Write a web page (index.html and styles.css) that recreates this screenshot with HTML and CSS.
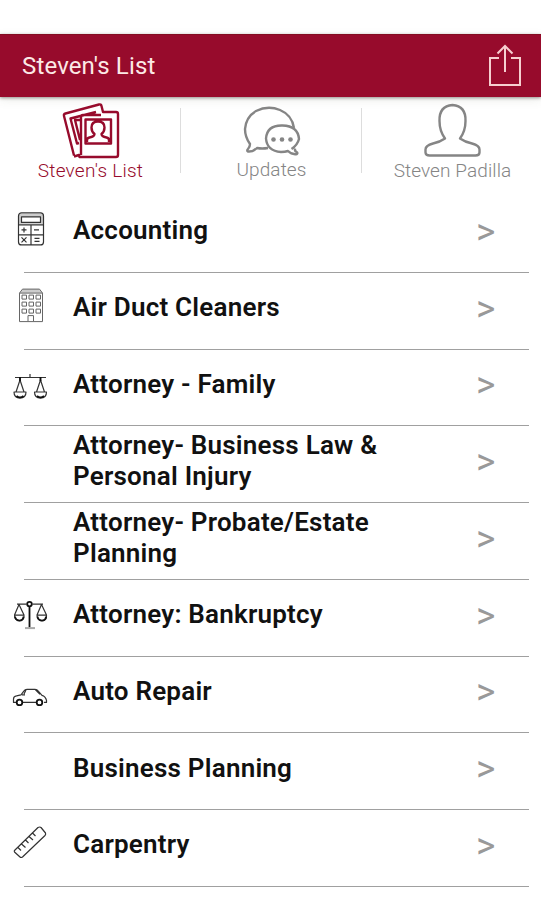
FILE: index.html
```html
<!DOCTYPE html>
<html lang="en">
<head>
    <meta charset="UTF-8">
    <meta name="viewport" content="width=device-width, initial-scale=1.0">
    <title>Steven's List</title>
    <link rel="stylesheet" href="styles.css">
</head>
<body>
    <header class="header">
        <h1>Steven's List</h1>
        <svg class="share" width="34" height="44" viewBox="0 0 34 44">
            <path d="M11 14H2v27h30V14h-9M17 28V2M9.500 9.500L17 2l7.500 7.500"/>
        </svg>
    </header>

    <nav class="tabs">
        <a class="tab active">
            <svg width="80" height="62" viewBox="1 0 80 62">
                <path d="M24 57.500L14 18q-.5-2 1.500-2.500L49 6.500q2-.5 2.500 1.500l1.500 6h13q2 0 2 2v41q0 2-2 2H29.500L29 57l-5 1.500M31 57V19q0-2 2-2h18M29 45l-2 .5-6.500-25L46 14M30 22h-5l5 20"/>
                <path d="M35.500 21.500h25.500v24H35.500zM37 44v-2q0-2 2.500-2.500 5-1 5-3.500-3-2.500-3-6.500 0-6 6.500-6t6.500 6q0 4-3 6.500 0 2.500 5 3.500 2.500.5 2.500 2.500v2"/>
            </svg>
            <span>Steven's List</span>
        </a>
        <a class="tab updates">
            <svg width="80" height="62" viewBox="2 0 80 62">
                <path d="M38 50q-6 1-11 0-4 4-9 3.500-1.500-1 0-2.500 2-2 2-5Q15 39 15 31q1-12 11-18 12-6 24-1 12 5 14 18"/>
                <path d="M61.500 51q6-4 7.500-10-1-13-16.500-13.500T36 40.500Q37 53 51 54q4 0 7-1 4 4 9 3 1-1-.5-2-2-1-1.500-3.500"/>
                <circle class="dot" cx="43.500" cy="41.500" r="2.300"/>
                <circle class="dot" cx="52" cy="41.500" r="2.300"/>
                <circle class="dot" cx="60.500" cy="41.500" r="2.300"/>
            </svg>
            <span>Updates</span>
        </a>
        <a class="tab">
            <svg width="80" height="62" viewBox="-3 0 80 62">
                <path d="M37.500 7Q51 8 50.500 23q0 10-5.500 17.500 5 3.500 12 5 7.500 2 7.500 6v3q0 3-4 3h-46q-4 0-4-3v-3q0-4 7.500-6 7-1.500 12-5Q24.500 33 24.500 23 24 8 37.500 7z"/>
            </svg>
            <span>Steven Padilla</span>
        </a>
    </nav>

    <ul class="list">
        <li>
            <svg class="icon" viewBox="0 2.100 60 50">
                <rect class="shade" x="15" y="8" width="24" height="10"/>
                <rect x="14.500" y="7" width="25" height="32" rx="3"/>
                <rect class="fill" x="17.500" y="11" width="19" height="5.500"/>
                <path d="M14.500 19h25M14.500 29h25M27 19v20M17.500 24h5M20 21.500v5M30 24h5M17.500 31.500l5 5M22.500 31.500l-5 5M30.500 32.500h5M30.500 35.500h5"/>
            </svg>
            <span class="name">Accounting</span>
            <span class="arrow">&gt;</span>
        </li>
        <li>
            <svg class="icon thin" viewBox="0 2.900 60 50">
                <path class="shade" d="M16 11l3-4h16l3 4z"/>
                <path d="M15.500 39.500V11l3-4h17l3 4v28.500zM15.500 11h23M24 39v-5.500h5.500V39"/>
                <path d="M18 13h4.500v4H18zM25 13h4.500v4H25zM32 13h4.500v4H32zM18 20h4.500v4H18zM25 20h4.500v4H25zM32 20h4.500v4H32zM18 27h4.500v4H18zM25 27h4.500v4H25zM32 27h4.500v4H32z"/>
            </svg>
            <span class="name">Air Duct Cleaners</span>
            <span class="arrow">&gt;</span>
        </li>
        <li>
            <svg class="icon" viewBox="0 -3 60 50">
                <path d="M11 12.500h31M26 9v4M16 12v3l-4 12M16 15l4 12M36.500 12v3l-4 12M36.500 15l4 12M10 27h12q0 6-6 6t-6-6zM30.500 27h12q0 6-6 6t-6-6z"/>
                <path class="bold" d="M16 12v4M36.500 12v4M12.500 31q3.500 3 7 0M33 31q3.500 3 7 0"/>
            </svg>
            <span class="name">Attorney - Family</span>
            <span class="arrow">&gt;</span>
        </li>
        <li>
            <span class="icon"></span>
            <span class="name">Attorney- Business Law &amp; Personal Injury</span>
            <span class="arrow">&gt;</span>
        </li>
        <li>
            <span class="icon"></span>
            <span class="name">Attorney- Probate/Estate Planning</span>
            <span class="arrow">&gt;</span>
        </li>
        <li>
            <svg class="icon" viewBox="0 2.400 60 50">
                <path d="M13 14.500h9.500M28.500 14.500H39M15 15l-4.500 10.500h9.500L15 15M37.500 15L33 25.500h9.500L37.500 15M10.500 25.500q0 5.500 5 5.500t4.500-5.500M33 25.500q0 5.500 5 5.500t4.500-5.500"/>
                <path class="bold" d="M25.500 17v21M11 27q1 4 4.500 4t4-4M33.500 27q1 4 4.500 4t4-4"/>
                <circle class="bold" cx="25.500" cy="14.500" r="2.300"/>
                <path class="base" d="M21 38.500h10"/>
            </svg>
            <span class="name">Attorney: Bankruptcy</span>
            <span class="arrow">&gt;</span>
        </li>
        <li>
            <svg class="icon" viewBox="0 -0.900 60 50">
                <path d="M12 32.500H9.500V29q0-2.500 3-3l4.500-1 3-4q1-1.500 3-1.500h8q2 0 3.500 2l3.500 4q3.500 1 4.500 5v2H40M19 32.500h14M18 25h3M22 20l-2 4M31 19.500l5 5"/>
                <circle class="bold" cx="15.500" cy="32.500" r="2.800"/>
                <circle class="bold" cx="35.500" cy="32.500" r="2.800"/>
            </svg>
            <span class="name">Auto Repair</span>
            <span class="arrow">&gt;</span>
        </li>
        <li>
            <span class="icon"></span>
            <span class="name">Business Planning</span>
            <span class="arrow">&gt;</span>
        </li>
        <li>
            <svg class="icon" viewBox="0 7 60 50">
                <path d="M10.500 35.500L34 12.500q2-1 3 0l4.500 5.500q.5 1.500-.5 2.500L18.500 42q-1.500 1-2.500 0L10.500 37q-.5-1 0-1.500zM14 32.500l3 3M17.500 29l4 3.500M21.500 25l3 3M25 21.500l4 3.500M28.500 18l3 3"/>
            </svg>
            <span class="name">Carpentry</span>
            <span class="arrow">&gt;</span>
        </li>
    </ul>
</body>
</html>
```
FILE: styles.css
```css
* {
    margin: 0;
    padding: 0;
    box-sizing: border-box;
}

body {
    font-family: Roboto, sans-serif;
    background: #fff;
    color: #111;
    padding-top: 34px;
    height: 900px;
    overflow: hidden;
}

svg {
    fill: none;
    stroke: currentColor;
    stroke-linejoin: round;
}

.header {
    display: flex;
    justify-content: space-between;
    align-items: center;
    height: 63px;
    padding: 0 19px 0 22px;
    background: #970b2c;
    color: #fce9e6;
    border-top: 1px solid #830d22;
    box-shadow: 0 1px 3px rgba(60, 50, 40, 0.5), 0 3px 10px rgba(80, 90, 60, 0.1);
}

.header h1 {
    font-size: 24px;
    font-weight: 400;
    letter-spacing: 0.15px;
}

.share {
    stroke-width: 2;
    stroke: #f6cfd0;
    stroke-linejoin: miter;
}

.tabs {
    display: grid;
    grid-template-columns: 181px 181px 1fr;
    height: 98px;
    padding-top: 1px;
}

.tab {
    position: relative;
    display: flex;
    flex-direction: column;
    align-items: center;
    color: #858585;
    font-size: 19px;
    font-weight: 300;
    line-height: 22px;
    letter-spacing: 0.1px;
}

.tab svg {
    stroke-width: 2.4;
}

.tab.active {
    color: #970b2c;
}

.tab.active span {
    letter-spacing: 0.25px;
}

.tab.updates span {
    margin-top: -1.5px;
}

.tab:last-child span {
    padding-left: 2px;
}

.tab + .tab::before {
    content: "";
    position: absolute;
    left: -1px;
    top: 10px;
    width: 1px;
    height: 65px;
    background: #ddd;
}

.tab .dot {
    fill: currentColor;
    stroke: none;
}

.list {
    list-style: none;
}

.list li {
    position: relative;
    display: flex;
    align-items: center;
    height: 76.75px;
    padding-left: 4px;
}

.list li::after {
    content: "";
    position: absolute;
    left: 24px;
    right: 12px;
    bottom: -1px;
    height: 1px;
    background: #a0a0a0;
}

.icon {
    width: 60px;
    height: 50px;
    stroke: #333;
    stroke-width: 1.2;
    overflow: visible;
}

.icon.thin {
    stroke: #666;
    stroke-width: 1;
}

.icon .bold {
    stroke: #111;
    stroke-width: 1.8;
}

.icon .shade {
    fill: #ccc;
    stroke: none;
}

.icon .fill {
    fill: #fff;
}

.icon .base {
    stroke: #aaa;
    stroke-width: 2;
}

.name {
    width: 330px;
    margin-left: 9px;
    padding-bottom: 5px;
    font-size: 26px;
    font-weight: 600;
    line-height: 31px;
    letter-spacing: 0.22px;
}

.arrow {
    margin-left: 73px;
    padding-bottom: 4px;
    color: #999;
    font-size: 37px;
    font-weight: 400;
}
```
